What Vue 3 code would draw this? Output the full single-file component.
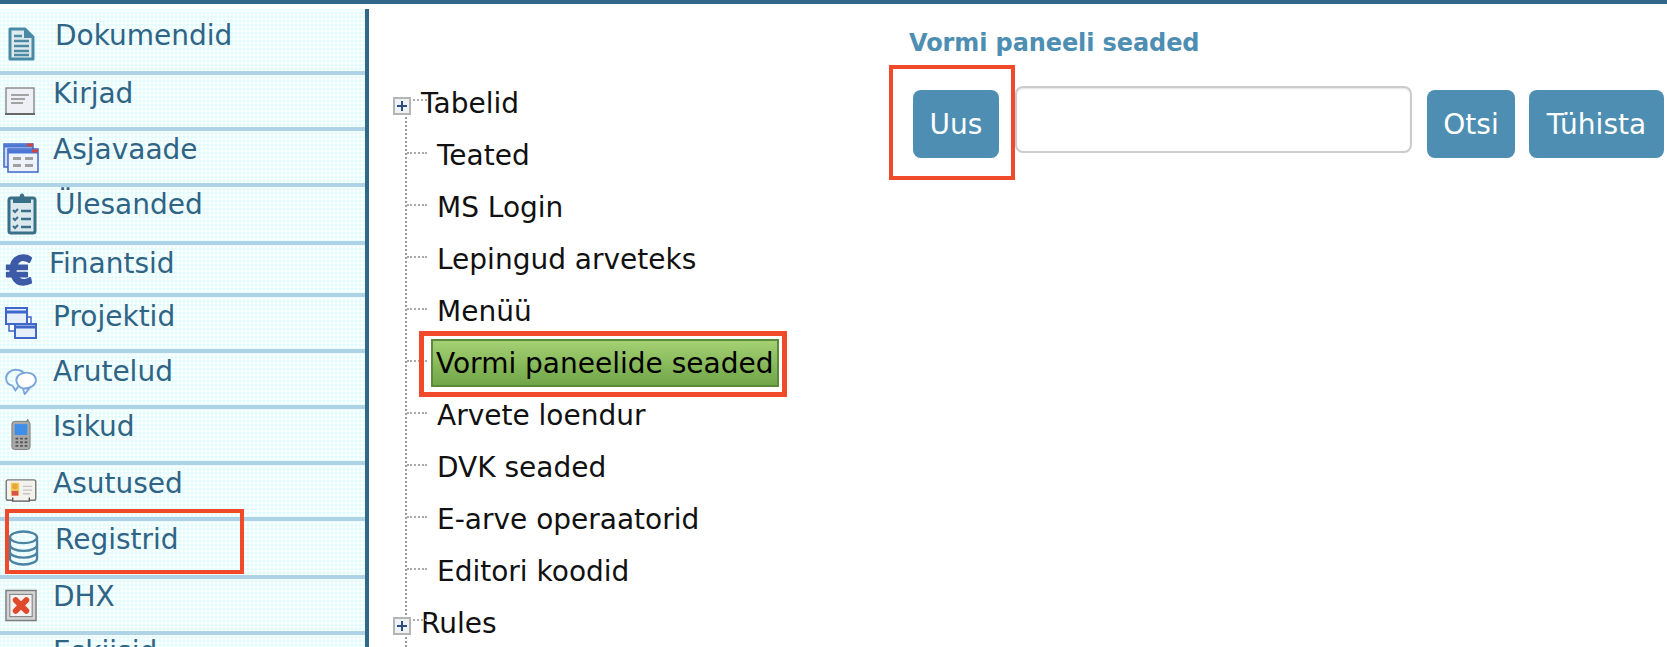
<template>
  <div class="page">
    <aside class="sidebar">
      <div
        v-for="item in menu"
        :key="item.label"
        class="menu-item"
        :style="{ height: item.height + 'px', paddingLeft: item.left + 'px' }"
      >
        <span class="menu-icon" :style="{ width: item.gap + 'px', marginTop: item.iconTop + 'px' }">
          <svg v-if="item.icon === 'doc'" width="27" height="34" viewBox="0 0 27 34">
            <path d="M2 2h15l8 8v22H2z" fill="#dfeaef" stroke="#4a8aa5" stroke-width="3" stroke-linejoin="round" />
            <path d="M16 2v9h9z" fill="#4a8aa5" />
            <path d="M6 9h8M6 14h15M6 19h15M6 24h15M6 28h15" stroke="#4a8aa5" stroke-width="2.4" />
          </svg>
          <svg v-else-if="item.icon === 'mail'" width="30" height="28" viewBox="0 0 30 28">
            <rect x="1" y="1" width="28" height="26" fill="#eef0f5" stroke="#8f8f8f" stroke-width="1.500" />
            <path d="M0 27h30" stroke="#666" stroke-width="2" />
            <path d="M6 8h18M6 12h14M6 16h12" stroke="#a3a3a3" stroke-width="2" />
          </svg>
          <svg v-else-if="item.icon === 'view'" width="36" height="30" viewBox="0 0 36 30">
            <rect x="1" y="1" width="29" height="23" fill="#cfdcf5" stroke="#3f66c9" stroke-width="1.500" />
            <path d="M1 3h29" stroke="#4a76d6" stroke-width="3" />
            <rect x="5" y="6" width="30" height="23" fill="#eef3fb" stroke="#3f66c9" stroke-width="1.500" />
            <path d="M5 8.500h30" stroke="#4a76d6" stroke-width="4" />
            <path d="M29 8h6M24 2h6" stroke="#d0453f" stroke-width="3" />
            <path d="M10 14h8v3h-8zM22 14h8v3h-8zM10 21h8v3h-8zM22 21h8v3h-8z" fill="#a0a0a0" />
          </svg>
          <svg v-else-if="item.icon === 'tasks'" width="30" height="42" viewBox="0 0 30 42">
            <rect x="2" y="5" width="26" height="35" rx="2" fill="#dbe8ee" stroke="#3a6f88" stroke-width="3" />
            <path d="M6 10V6h6l1-4c1-2 3-2 4 0l1 4h6v4z" fill="#3a6f88" />
            <path d="M6 17l2 2 3-3M6 25l2 2 3-3M6 33l2 2 3-3" fill="none" stroke="#3a6f88" stroke-width="2" />
            <path d="M14 18h10M14 26h10M14 34h10" stroke="#3a6f88" stroke-width="2.600" />
          </svg>
          <svg v-else-if="item.icon === 'euro'" width="28" height="33" viewBox="3 1 26 32">
            <path d="M28 6c-2-2-5-3-8-3-6 0-11 4-12 10H4v4h3.500v3H4v4h5c2 5 6 8 11 8 3 0 6-1 8-2l-1-5c-2 1-4 2-6 2-3 0-5-1-6-3h9v-4H13v-3h11v-4H14c1-3 3-5 6-5 2 0 4 1 6 2z" fill="#3c5aa6" stroke="#3c5aa6" stroke-width="1.500" stroke-linejoin="round" />
          </svg>
          <svg v-else-if="item.icon === 'project'" width="32" height="32" viewBox="0 0 32 32">
            <rect x="4" y="10" width="22" height="14" fill="#fff" stroke="#3f66c9" stroke-width="1.500" />
            <rect x="1" y="1" width="21" height="16" fill="#e6eefa" stroke="#3f66c9" stroke-width="2" />
            <path d="M1 5h21" stroke="#3f66c9" stroke-width="3" />
            <rect x="10" y="17" width="21" height="14" fill="#e6eefa" stroke="#3f66c9" stroke-width="2" />
            <path d="M10 20h21" stroke="#3f66c9" stroke-width="3" />
          </svg>
          <svg v-else-if="item.icon === 'chat'" width="32" height="28" viewBox="0 0 34 30">
            <path d="M8 20C3 19 1 16 1 12c0-5 5-9 10-9s9 2 10 6M8 20l3 5 3-4" fill="none" stroke="#7ba4d8" stroke-width="2" />
            <path d="M20 23c6 0 13-3 13-9 0-5-5-8-10-8S12 9 12 14c0 4 3 8 7 9l2 6 5-6z" fill="#fff" stroke="#7ba4d8" stroke-width="2" />
          </svg>
          <svg v-else-if="item.icon === 'phone'" width="20" height="34" viewBox="0 0 22 34">
            <path d="M17 3l2-3" stroke="#777" stroke-width="2" />
            <rect x="1" y="2" width="20" height="31" rx="3" fill="#a9a9a9" stroke="#7a7a7a" />
            <rect x="4" y="5" width="14" height="12" fill="#3f8fe8" />
            <path d="M5 21h3M10 21h3M15 21h3M5 25h3M10 25h3M15 25h3M5 29h3M10 29h3M15 29h3" stroke="#555" stroke-width="2" />
          </svg>
          <svg v-else-if="item.icon === 'card'" width="32" height="24" viewBox="0 0 34 26">
            <rect x="1" y="1" width="32" height="22" rx="2" fill="#f4f2ec" stroke="#777" stroke-width="1.500" />
            <rect x="6" y="4" width="9" height="14" fill="#eec95a" />
            <circle cx="10.500" cy="8" r="3" fill="#e8a33a" />
            <rect x="7" y="13" width="7" height="5" fill="#d9534f" />
            <path d="M19 8h10M19 12h10M19 16h8" stroke="#c4c4c4" stroke-width="1.500" />
            <path d="M8 20v4h18v-4" fill="#f4f2ec" stroke="#555" stroke-width="1.500" />
          </svg>
          <svg v-else-if="item.icon === 'db'" width="31" height="38" viewBox="0 0 32 38">
            <ellipse cx="16" cy="8" rx="14" ry="6" fill="none" stroke="#4b84a0" stroke-width="2.400" />
            <path d="M2 8v22c0 3 6 6 14 6s14-3 14-6V8M2 16c0 3 6 6 14 6s14-3 14-6M2 23c0 3 6 6 14 6s14-3 14-6" fill="none" stroke="#4b84a0" stroke-width="2.400" />
          </svg>
          <svg v-else-if="item.icon === 'dhx'" width="32" height="33" viewBox="0 0 33 33">
            <rect x="1" y="1" width="31" height="31" fill="#d4d4d4" stroke="#7d7d7d" stroke-width="1.500" />
            <rect x="5" y="5" width="23" height="23" fill="#f3f3f3" stroke="#777" />
            <path d="M11 11l11 11M22 11L11 22" stroke="#e04a2c" stroke-width="6" stroke-linecap="round" />
          </svg>
        </span>
        <span class="menu-label" :style="{ marginTop: item.textTop + 'px' }">{{ item.label }}</span>
      </div>
      <div class="callout callout-menu"></div>
    </aside>

    <section class="tree">
      <div v-for="node in tree" :key="node.label" class="tree-row" :class="{ root: node.root, child: !node.root }">
        <span v-if="node.root" class="expander"><span class="plus"></span></span>
        <span class="dots"></span>
        <span class="tree-label" :class="{ selected: node.selected }">{{ node.label }}</span>
        <span v-if="node.selected" class="callout callout-tree"></span>
      </div>
    </section>

    <main class="panel">
      <h1 class="panel-title">Vormi paneeli seaded</h1>
      <div class="toolbar">
        <span class="uus-wrap">
          <button class="btn uus">Uus</button>
        </span>
        <input class="search" type="text" />
        <button class="btn otsi">Otsi</button>
        <button class="btn tuhista">Tühista</button>
      </div>
    </main>
  </div>
</template>

<script setup>
const menu = [
  { label: 'Dokumendid', icon: 'doc', height: 66, left: 8, gap: 47, iconTop: 18, textTop: 9 },
  { label: 'Kirjad', icon: 'mail', height: 56, left: 5, gap: 48, iconTop: 12, textTop: 1 },
  { label: 'Asjavaade', icon: 'view', height: 56, left: 3, gap: 50, iconTop: 12, textTop: 1 },
  { label: 'Ülesanded', icon: 'tasks', height: 58, left: 7, gap: 48, iconTop: 6, textTop: 0 },
  { label: 'Finantsid', icon: 'euro', height: 52, left: 5, gap: 44, iconTop: 8, textTop: 1 },
  { label: 'Projektid', icon: 'project', height: 56, left: 5, gap: 48, iconTop: 10, textTop: 2 },
  { label: 'Arutelud', icon: 'chat', height: 56, left: 5, gap: 48, iconTop: 14, textTop: 1 },
  { label: 'Isikud', icon: 'phone', height: 56, left: 11, gap: 42, iconTop: 9, textTop: 0 },
  { label: 'Asutused', icon: 'card', height: 56, left: 5, gap: 48, iconTop: 14, textTop: 1 },
  { label: 'Registrid', icon: 'db', height: 58, left: 8, gap: 47, iconTop: 8, textTop: 1 },
  { label: 'DHX', icon: 'dhx', height: 56, left: 5, gap: 48, iconTop: 10, textTop: 0 },
  { label: 'Eskiisid', icon: '', height: 56, left: 53, gap: 0, iconTop: 0, textTop: -1 }
]

const tree = [
  { label: 'Tabelid', root: true },
  { label: 'Teated' },
  { label: 'MS Login' },
  { label: 'Lepingud arveteks' },
  { label: 'Menüü' },
  { label: 'Vormi paneelide seaded', selected: true },
  { label: 'Arvete loendur' },
  { label: 'DVK seaded' },
  { label: 'E-arve operaatorid' },
  { label: 'Editori koodid' },
  { label: 'Rules', root: true }
]
</script>

<style>
html,
body {
  margin: 0;
  background: #fff;
  overflow: hidden;
}
</style>

<style scoped>
.page {
  position: relative;
  display: flex;
  height: 647px;
  overflow: hidden;
  border-top: 4px solid #336788;
  box-sizing: border-box;
  font-family: "DejaVu Sans", Verdana, sans-serif;
  background: #fff;
}

.sidebar {
  position: relative;
  flex: none;
  width: 365px;
  height: 640px;
  margin-top: 5px;
  border-right: 4px solid #336788;
  background-color: #e2fbfd;
  background-image: radial-gradient(circle at 2px 2px, #fff 1.400px, transparent 1.700px);
  background-size: 4px 4px;
}

.menu-item {
  display: flex;
  align-items: flex-start;
  box-sizing: border-box;
  border-bottom: 4px solid #afd3e6;
}

.menu-icon {
  flex: none;
  display: block;
  line-height: 0;
}

.menu-icon svg {
  filter: blur(0.4px);
}

.menu-label {
  color: #2f6485;
  font-size: 28px;
  line-height: 36px;
  white-space: nowrap;
}

.callout {
  position: absolute;
  box-sizing: border-box;
  border: 4px solid #f04a2a;
  pointer-events: none;
}

.callout-menu {
  left: 5px;
  top: 500px;
  width: 239px;
  height: 65px;
}

.tree {
  position: relative;
  flex: none;
  width: 510px;
  padding: 73px 0 0 21px;
  box-sizing: border-box;
  color: #111;
}

.tree::before {
  content: "";
  position: absolute;
  left: 36px;
  top: 113px;
  bottom: 0;
  border-left: 2px dotted #999;
}

.tree-row {
  position: relative;
  display: flex;
  align-items: center;
  height: 52px;
  font-size: 28px;
  white-space: nowrap;
}

.expander {
  position: absolute;
  left: 3px;
  top: 20px;
  width: 18px;
  height: 18px;
  box-sizing: border-box;
  border: 2px solid #b5b5b5;
  background: #eef1f5;
  z-index: 1;
}

.plus {
  position: absolute;
  left: 2px;
  top: 2px;
  width: 10px;
  height: 10px;
  background:
    linear-gradient(#2d4f80, #2d4f80) center / 10px 2px no-repeat,
    linear-gradient(#2d4f80, #2d4f80) center / 2px 10px no-repeat;
}

.dots {
  position: absolute;
  top: 23px;
  left: 17px;
  width: 20px;
  border-top: 2px dotted #aaa;
}

.root .dots {
  top: 22px;
  left: 23px;
  width: 14px;
}

.root .tree-label {
  margin-left: 31px;
}

.child .tree-label {
  margin-left: 47px;
}

.child .selected {
  position: relative;
  margin-left: 41px;
  width: 348px;
  padding: 0 0 0 3px;
  height: 48px;
  line-height: 46px;
  box-sizing: border-box;
  border: 2px solid #5c8a3c;
  color: #000;
  background: linear-gradient(#a3d072, #71a648);
}

.callout-tree {
  left: 29px;
  top: -6px;
  width: 368px;
  height: 66px;
  border-width: 5px;
}

.panel {
  flex: 1;
  min-width: 0;
  padding: 23px 0 0 30px;
}

.panel-title {
  margin: 0;
  color: #4d8eb2;
  font-size: 24px;
  font-weight: bold;
  line-height: 32px;
  letter-spacing: -0.1px;
  white-space: nowrap;
}

.toolbar {
  display: flex;
  align-items: flex-start;
  margin-top: 6px;
}

.btn {
  height: 68px;
  padding: 0;
  border: 0;
  border-radius: 8px;
  background: #4d8eb2;
  color: #fff;
  font-family: inherit;
  font-size: 28px;
}

.uus-wrap {
  flex: none;
  display: block;
  box-sizing: border-box;
  width: 126px;
  height: 115px;
  margin-left: -20px;
  padding: 21px 0 0 20px;
  border: 4px solid #f04a2a;
}

.uus {
  display: block;
  width: 86px;
}

.search {
  flex: none;
  width: 397px;
  height: 67px;
  margin-top: 21px;
  box-sizing: border-box;
  border: 2px solid #ccc;
  border-radius: 8px;
  background: #fff;
  box-shadow: inset 0 1px 2px rgba(0, 0, 0, 0.1);
  outline: none;
}

.otsi {
  flex: none;
  width: 88px;
  margin: 25px 0 0 15px;
}

.tuhista {
  flex: none;
  width: 135px;
  margin: 25px 0 0 14px;
}
</style>
